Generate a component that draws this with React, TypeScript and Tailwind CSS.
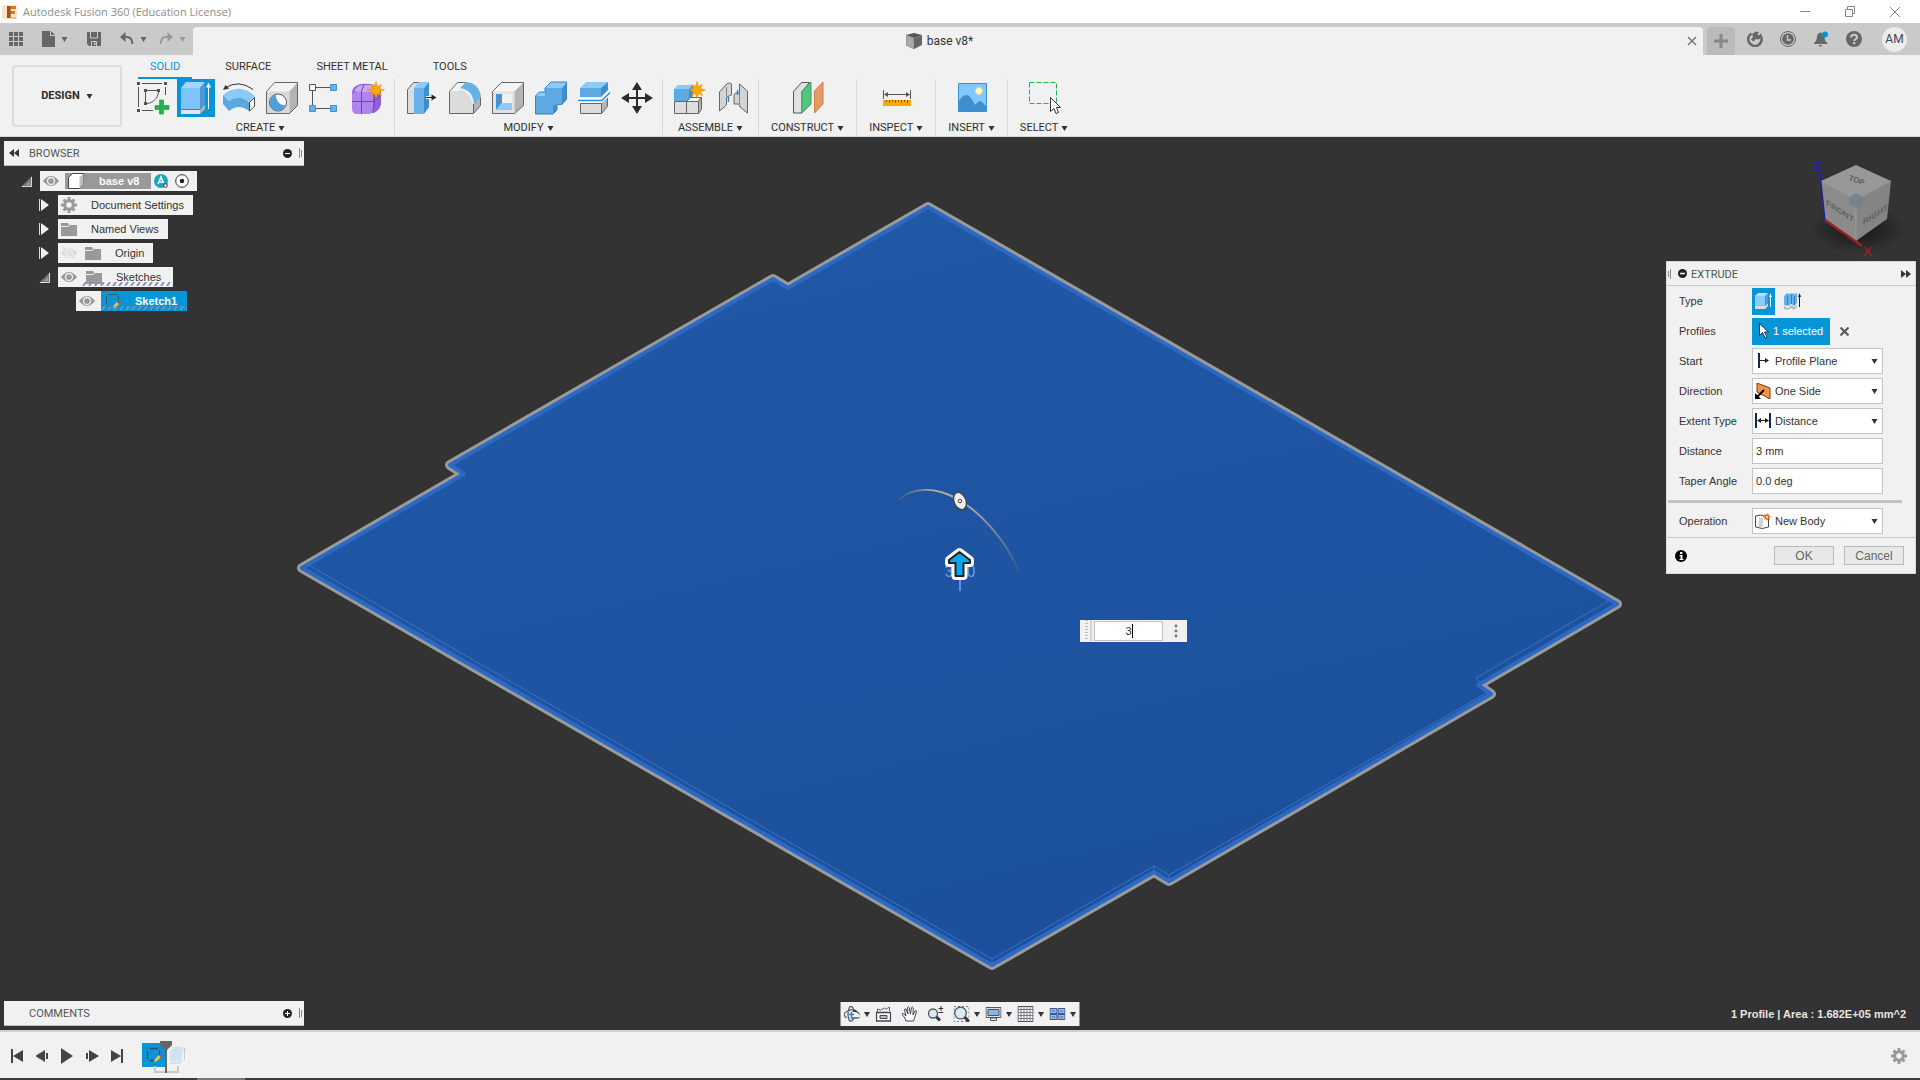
import React from "react";

type Kids = { children?: React.ReactNode };

const UI = "font-['Roboto','Liberation_Sans',sans-serif]";
const ARIAL = "font-['Liberation_Sans',Arial,sans-serif]";

const Ic = ({ w = 38, h = 38, children }: Kids & { w?: number; h?: number }) => (
  <svg width={w} height={h} viewBox={`0 0 ${w} ${h}`} fill="none" aria-hidden="true" className="block shrink-0">
    {children}
  </svg>
);

const Caret = ({ color = "#333" }: { color?: string }) => (
  <Ic w={7} h={5}>
    <path d="M0.5 0h6L3.500 5z" fill={color} />
  </Ic>
);

const Star = ({ x, y }: { x: number; y: number }) => (
  <path
    transform={`translate(${x} ${y})`}
    d="M0-8.500 1.500-3.500 5.500-5.500 3.500-1.500 8.500 0 3.500 1.500 5.500 5.500 1.500 3.500 0 8.500-1.500 3.500-5.500 5.500-3.500 1.500-8.500 0-3.500-1.500-5.500-5.500-1.500-3.500z"
    fill="#ffa800"
    stroke="#e08a00"
    strokeWidth=".5"
  />
);

/* ---------- ribbon icons ---------- */

const SketchIcon = () => (
  <Ic>
    <path d="M8 4.500h20M4.500 8v20M8 31.500h11M31.500 8v8" stroke="#555" />
    <g fill="#555">
      <path d="M3 3h3v3H3zM30 3h3v3h-3zM3 30h3v3H3zM10 10h3v3h-3zM23 10h3v3h-3zM10 23h3v3h-3z" />
    </g>
    <path d="M13 11.500h10M11.500 13v10M24.500 13C24 19 19 24 13 24.500" stroke="#555" />
    <path d="M25.500 21h4v5.500H35v4h-5.500V35h-4v-4.500H21v-4h4.500z" fill="#22b14c" stroke="#149a3c" strokeWidth=".6" />
  </Ic>
);
const ExtrudeIcon = () => (
  <Ic>
    <path d="M4 31h19v4H4z" fill="#e4e4e4" />
    <path d="M23 31l5-6v5l-5 5z" fill="#b5b5b5" />
    <path d="M4 9h19v21H4z" fill="#7cc4fb" />
    <path d="M4 9l5-6h19l-5 6z" fill="#a3d7ff" />
    <path d="M23 9l5-6v21l-5 6z" fill="#4a9ad6" />
    <path d="M31.500 30V6" stroke="#fff" />
    <path d="M31.500 3.500l2.500 5h-5z" fill="#fff" />
  </Ic>
);
const RevolveIcon = () => (
  <Ic>
    <path d="M3 16Q19 3 35 17l-6 6Q19 15 9 22z" fill="#8acbfb" />
    <path d="M3 16l6 6Q19 15 29 23v9Q19 24 9 32l-6-7z" fill="#5ba8e0" />
    <path d="M29.500 23.500l5-5v9l-5 4.500z" fill="#fff" stroke="#444" />
    <path d="M5 9Q19 0 33 10.500" stroke="#333" />
    <path d="M3 11l2.500-5L9 9.500z" fill="#333" />
  </Ic>
);
const HoleIcon = () => (
  <Ic>
    <path d="M3.500 12.500l8-9h23l-8 9z" fill="#f3f3f3" />
    <path d="M3.500 12.500h23v22h-23z" fill="#d9d9d9" />
    <path d="M26.500 12.500l8-9v23l-8 8z" fill="#b4b4b4" />
    <path d="M3.500 12.500l8-9h23v23l-8 8h-23z" stroke="#666" />
    <circle cx="15" cy="23.500" r="8.500" fill="#fff" stroke="#555" />
    <path d="M13 16a8 8 0 1 0 9.500 10C17 27 13 22 13 16z" fill="#4f9fdc" />
  </Ic>
);
const PatternIcon = () => (
  <Ic>
    <path d="M10 8.500h14M6.500 12v14M10 29.500h14" stroke="#555" />
    <path d="M3.500 5.500h6v6h-6z" fill="#fff" stroke="#555" />
    <path d="M24.500 5.500h6v6h-6zM3.500 26.500h6v6h-6zM24.500 26.500h6v6h-6z" fill="#68b0e8" stroke="#4394d2" />
  </Ic>
);
const FormIcon = () => (
  <Ic>
    <path d="M3 14Q3 8 9 6q4-2 12-1 9 1 11 6v14q-1 6-7 9H9q-6-1-6-7z" fill="#8e62d0" />
    <path d="M3 16q0-3 5-3h11q5 0 5 3v13q0 6-5 6H8q-5 0-5-6z" fill="#b083ee" />
    <path d="M5 12Q8 6 14 6h12l-3 7H9z" fill="#c9a4f8" />
    <path d="M12.500 13v22M3 22.500h21l7-5M15 6l-3 7M25 13q1 12-1 19" stroke="#6f45b0" />
    <Star x={27} y={11} />
  </Ic>
);
const PressPullIcon = () => (
  <Ic>
    <path d="M5.500 10.500l6-7h6l-5 7v24h-7z" fill="#dcdcdc" stroke="#666" />
    <path d="M12 9h10v26H12z" fill="#68b0e8" />
    <path d="M12 9l5-6h10l-5 6z" fill="#8acbfb" />
    <path d="M22 9l5-6v25l-5 7z" fill="#3d8fcd" />
    <path d="M24 18.500h7" stroke="#fff" strokeWidth="3" />
    <path d="M24 18.500h7" stroke="#222" />
    <path d="M29.500 15.500l5 3-5 3z" fill="#222" />
  </Ic>
);
const FilletIcon = () => (
  <Ic>
    <path d="M4.500 12.500l8-9h10l-7 7q9 2 13 16v8h-24z" fill="#dcdcdc" />
    <path d="M4.500 12.500l8-9h8l-6 8z" fill="#f5f5f5" />
    <path d="M28.500 25l7-7v9l-7 7.500z" fill="#b4b4b4" />
    <path d="M15 9l6-6Q34 4 36 18l-7 7Q28 11 15 9z" fill="#68b0e8" />
    <path d="M20.500 3.500h-8l-8 9v22h24l7-8v-8M28.500 25v9" stroke="#666" />
  </Ic>
);
const ShellIcon = () => (
  <Ic>
    <path d="M4.500 12.500l9-9h22l-9 9z" fill="#f5f5f5" />
    <path d="M4.500 12.500h22v22h-22z" fill="#e2e2e2" />
    <path d="M26.500 12.500l9-9v23l-9 8z" fill="#b4b4b4" />
    <path d="M4.500 12.500l9-9h22v23l-9 8h-22z" stroke="#666" />
    <path d="M8 15h16v16H8z" fill="#fff" />
    <path d="M8 15h6v9l-6 7z" fill="#4394d2" />
    <path d="M14 15h10v9H14z" fill="#f1f1f1" />
    <path d="M8 31l6-7h10v7z" fill="#8acbfb" />
  </Ic>
);
const CombineIcon = () => (
  <Ic>
    <path d="M4 17h10V9h17v17H23v9H4z" fill="#5fa9e2" />
    <path d="M4 17l4-4h6v4zM14 9l6-6h16l-5 6z" fill="#8acbfb" />
    <path d="M31 9l5-6v17l-5 6h-5v5l-4 4v-9h9z" fill="#3d8fcd" />
    <path d="M4.500 17l4-4h5.500V9l6-6h15.500v17l-5 5.500H26V31l-4 4H4.500z" stroke="#3585c2" />
  </Ic>
);
const SplitIcon = () => (
  <Ic>
    <path d="M6 9h21v9H6z" fill="#5fa9e2" />
    <path d="M6 9l6-6h22l-7 6z" fill="#8acbfb" />
    <path d="M27 9l7-6v8l-7 7z" fill="#3d8fcd" />
    <path d="M6.500 24.500h21v10h-21z" fill="#dcdcdc" stroke="#666" />
    <path d="M27.500 24.500l6-6v9l-6 7z" fill="#b4b4b4" stroke="#666" />
    <path d="M4 21.500h24l8-8" stroke="#fff" strokeWidth="4" />
    <path d="M4 21.500h24l8-8" stroke="#1e90e6" strokeWidth="1.500" />
  </Ic>
);
const MoveIcon = () => (
  <Ic>
    <path d="M20 8v22M9 19h22" stroke="#2b2b2b" strokeWidth="2" />
    <path d="M20 3l5 8H15zM20 35l5-8H15zM4 19l8-5v10zM36 19l-8-5v10z" fill="#2b2b2b" />
  </Ic>
);
const ComponentIcon = () => (
  <Ic>
    <path d="M4 10h15v12H4z" fill="#5fa9e2" />
    <path d="M4 10l4-4h15l-4 4z" fill="#8acbfb" />
    <path d="M19 10l4-4v11l-4 5z" fill="#3d8fcd" />
    <path d="M4.500 22.500h12v12h-12zM16.500 22.500h12v12h-12z" fill="#dedede" stroke="#666" />
    <path d="M16.500 22.500l4-4h11l-3 4z" fill="#f7f7f7" stroke="#666" />
    <path d="M28.500 22.500l3-4v12l-3 4z" fill="#b4b4b4" stroke="#666" />
    <Star x={27} y={11} />
  </Ic>
);
const JointIcon = () => (
  <Ic>
    <path d="M6.500 13l7-8q3-2 5 0v11l-5 2v8l-7 6z" fill="#d3d3d3" stroke="#666" />
    <path d="M13.500 8v9" stroke="#888" />
    <path d="M34.500 12l-8-7v9l-4 0-1.500 2v9h5l1 3 7.500 6z" fill="#d3d3d3" stroke="#666" />
    <path d="M26.500 14v14" stroke="#888" />
    <path d="M15.500 18v5M24.500 11v5" stroke="#1e90e6" strokeWidth="1.500" />
  </Ic>
);
const ConstructIcon = () => (
  <Ic>
    <path d="M4.500 12.500l8-9h8l-7.500 9v21.500H4.500z" fill="#e0e0e0" stroke="#555" />
    <path d="M13 12.500L22 3v22l-9 9z" fill="#56c57c" stroke="#34a45b" />
    <path d="M25.500 12L34 3v22l-8.500 9z" fill="#e79a66" stroke="#cf7d45" />
  </Ic>
);
const InspectIcon = () => (
  <Ic>
    <path d="M6.500 11v9M33.500 11v9M8 15.500h24" stroke="#555" />
    <path d="M7 15.500l4-2.500v5zM33 15.500l-4-2.500v5z" fill="#555" />
    <path d="M6 21h28v6H6z" fill="#ffa800" />
    <path d="M9.500 21v2M12.500 21v3M15.500 21v2M18.500 21v3M21.500 21v2M24.500 21v3M27.500 21v2M30.500 21v3" stroke="#7a5200" />
  </Ic>
);
const InsertIcon = () => (
  <Ic>
    <path d="M5.500 4.500h28v28h-28z" fill="#82c8fd" stroke="#3d8fcd" />
    <path d="M6 22q4-7 8-6 3 0 8 10 5-6 7-3l4 4v5H6z" fill="#3d8fcd" />
    <circle cx="26" cy="12" r="3.500" fill="#fffbd0" stroke="#e8dc8a" />
  </Ic>
);
const SelectIcon = () => (
  <Ic>
    <path d="M4.500 3.500h27v21h-27z" stroke="#22b14c" strokeDasharray="5 2" />
    <path d="M25.500 18.500v14l3.500-3 2 5 2.500-1-2-5h4z" fill="#fff" stroke="#333" />
  </Ic>
);

const Tool = ({ label, active, children }: Kids & { label: string; active?: boolean }) => (
  <button type="button" aria-label={label} className={active ? "bg-[#0696d7]" : ""}>
    {children}
  </button>
);

const Group = ({ name, wide, last, children }: Kids & { name: string; wide?: boolean; last?: boolean }) => (
  <div className={`flex flex-col items-center justify-between ${wide ? "px-[7px]" : "px-3"} ${last ? "" : "border-r border-[#d9d9d9]"}`}>
    <div className="flex gap-[5px]">{children}</div>
    <button type="button" className="flex items-center gap-[3px] text-[11px] leading-[14px] text-[#2f2f2f]">
      {name}
      <Caret />
    </button>
  </div>
);

const Ribbon = () => (
  <div className="flex h-[82px] shrink-0 border-b border-[#d5d9d8] bg-[#f1f1f1] pl-3">
    <button type="button" className="mt-[10px] mr-[5px] flex h-[62px] w-[110px] items-center justify-center gap-[6px] rounded border-2 border-[#dcdcdc] text-[11px] font-bold text-[#2b2b2b]">
      DESIGN
      <Caret />
    </button>
    <div className="flex flex-col">
      <div role="tablist" className="flex h-6 gap-[21px] pl-[11px] text-[11px] text-[#333]">
        <button type="button" role="tab" aria-selected="true" className="border-b-2 border-[#0696d7] px-3 pt-[2px] text-[#0696d7]">SOLID</button>
        <button type="button" role="tab" className="px-3">SURFACE</button>
        <button type="button" role="tab" className="px-3">SHEET METAL</button>
        <button type="button" role="tab" className="px-3">TOOLS</button>
      </div>
      <div className="flex h-[56px]">
        <Group name="CREATE" wide>
          <Tool label="Create sketch"><SketchIcon /></Tool>
          <Tool label="Extrude" active><ExtrudeIcon /></Tool>
          <Tool label="Revolve"><RevolveIcon /></Tool>
          <Tool label="Hole"><HoleIcon /></Tool>
          <Tool label="Pattern"><PatternIcon /></Tool>
          <Tool label="Create form"><FormIcon /></Tool>
        </Group>
        <Group name="MODIFY" wide>
          <Tool label="Press pull"><PressPullIcon /></Tool>
          <Tool label="Fillet"><FilletIcon /></Tool>
          <Tool label="Shell"><ShellIcon /></Tool>
          <Tool label="Combine"><CombineIcon /></Tool>
          <Tool label="Split body"><SplitIcon /></Tool>
          <Tool label="Move"><MoveIcon /></Tool>
        </Group>
        <Group name="ASSEMBLE" wide>
          <Tool label="New component"><ComponentIcon /></Tool>
          <Tool label="Joint"><JointIcon /></Tool>
        </Group>
        <Group name="CONSTRUCT"><Tool label="Offset plane"><ConstructIcon /></Tool></Group>
        <Group name="INSPECT"><Tool label="Measure"><InspectIcon /></Tool></Group>
        <Group name="INSERT"><Tool label="Insert image"><InsertIcon /></Tool></Group>
        <Group name="SELECT" last><Tool label="Select"><SelectIcon /></Tool></Group>
      </div>
    </div>
  </div>
);

/* ---------- window chrome ---------- */

const TitleBar = () => (
  <header className="flex h-[23px] shrink-0 items-center bg-white pr-5 pl-[2px]">
    <Ic w={16} h={16}>
      <path d="M0 1h15v14H0z" fill="#fbe3cd" />
      <path d="M5 2h9v3H8.500v2H13v3H8.500v4H5z" fill="#d97a1d" />
      <path d="M5 2h3.500v12H5z" fill="#a9500b" />
      <path d="M9 13h5v2H9z" fill="#f4b983" />
    </Ic>
    <h1 className="ml-[5px] grow font-['Open_Sans','Noto_Sans',sans-serif] text-[11px] leading-4 text-[#8c8c8c]">Autodesk Fusion 360 (Education License)</h1>
    <div className="flex gap-[35px]">
      <button type="button" aria-label="Minimize"><Ic w={10} h={12}><path d="M0 5.500h10" stroke="#888" /></Ic></button>
      <button type="button" aria-label="Restore"><Ic w={10} h={12}><path d="M.5 3.500h7v7h-7zM2.500 3V.5h7v7H8" stroke="#888" /></Ic></button>
      <button type="button" aria-label="Close"><Ic w={10} h={12}><path d="M0 1l10 10M10 1L0 11" stroke="#888" /></Ic></button>
    </div>
  </header>
);

const QuickBar = () => (
  <div className="flex h-8 shrink-0 bg-[#cacaca]">
    <div className="flex w-[193px] shrink-0 items-center pl-[9px]">
      <button type="button" aria-label="Data panel">
        <Ic w={14} h={14}><path d="M0 0h4v4H0zM5 0h4v4H5zM10 0h4v4h-4zM0 5h4v4H0zM5 5h4v4H5zM10 5h4v4h-4zM0 10h4v4H0zM5 10h4v4H5zM10 10h4v4h-4z" fill="#666" /></Ic>
      </button>
      <button type="button" aria-label="File" className="ml-[19px] flex items-center gap-[6px]">
        <Ic w={13} h={16}><path d="M0 0h8v5h5v11H0zM9 0l4 4H9z" fill="#666" /></Ic>
        <Caret color="#666" />
      </button>
      <button type="button" aria-label="Save" className="ml-[19px]">
        <Ic w={14} h={14}>
          <path d="M0 0h14v14H2l-2-2z" fill="#666" />
          <path d="M3.500 0v6h7V0M4.500 14V9.500h5V14" stroke="#cacaca" />
          <path d="M7 10.500h1.500V13H7z" fill="#cacaca" />
        </Ic>
      </button>
      <button type="button" aria-label="Undo" className="ml-[19px] flex items-center gap-[6px]">
        <Ic w={14} h={14}><path d="M2 5h5q5 0 5.500 7" stroke="#666" strokeWidth="2" /><path d="M0 5l5.500-5v10z" fill="#666" /></Ic>
        <Caret color="#666" />
      </button>
      <button type="button" aria-label="Redo" className="ml-3 flex items-center gap-[6px]">
        <Ic w={14} h={14}><path d="M12 5H7q-5 0-5.500 7" stroke="#999" strokeWidth="2" /><path d="M14 5L8.500 0v10z" fill="#999" /></Ic>
        <Caret color="#999" />
      </button>
    </div>
    <div className="mt-1 flex grow items-center rounded-t bg-[#f1f1f1] pr-[5px]">
      <div className="flex grow items-center justify-center gap-[5px] text-[12px] text-[#333]">
        <Ic w={16} h={16}>
          <path d="M0 2l8-2 8 2-8 3z" fill="#555" />
          <path d="M0 2l8 3v11l-8-4z" fill="#aaa" stroke="#777" strokeWidth=".6" />
          <path d="M8 5l8-3v10l-8 4z" fill="#666" />
        </Ic>
        base v8*
      </div>
      <button type="button" aria-label="Close tab" className="p-[1px]"><Ic w={10} h={10}><path d="M1 1l8 8M9 1L1 9" stroke="#777" strokeWidth="1.500" /></Ic></button>
    </div>
    <button type="button" aria-label="New tab" className="mt-1 ml-1 flex w-7 items-center justify-center rounded-t bg-[#bbb]">
      <Ic w={14} h={14}><path d="M7 0v14M0 7h14" stroke="#888" strokeWidth="3" /></Ic>
    </button>
    <div className="flex items-center gap-[17px] pr-[13px] pl-3">
      <button type="button" aria-label="Extensions">
        <Ic w={16} h={16}>
          <path d="M4.500 2.500a6.700 6.700 0 1 0 9.500 3" stroke="#666" strokeWidth="2.500" />
          <path d="M5 3l4-2.500 3 .5-1.500 2.500 1.500 1 2-2.500.8 3L12 8.500 9 8 6.500 10.500 4 8.500 6 6z" fill="#666" />
        </Ic>
      </button>
      <button type="button" aria-label="Job status">
        <Ic w={16} h={16}>
          <circle cx="8" cy="8" r="7.500" stroke="#666" />
          <circle cx="8" cy="8" r="5.800" fill="#666" />
          <path d="M7.500 4v5H11" stroke="#cacaca" strokeWidth="1.500" />
        </Ic>
      </button>
      <button type="button" aria-label="Notifications">
        <Ic w={16} h={16}>
          <path d="M1 12q3-2 3-7 1-3 3-3.500 4 .5 4.500 4.500 0 4 3 6v1H1z" fill="#666" />
          <path d="M5.500 14h4L7.500 16z" fill="#666" />
          <circle cx="12" cy="3.500" r="3" fill="#0696d7" />
        </Ic>
      </button>
      <button type="button" aria-label="Help">
        <Ic w={16} h={16}>
          <circle cx="8" cy="8" r="8" fill="#666" />
          <path d="M5 6.500Q5.200 3.800 8 3.800T11 6.200Q11 7.500 9.300 8.300 8.200 9 8.200 10" stroke="#cacaca" strokeWidth="2" />
          <path d="M7 11.200h2.300v2H7z" fill="#cacaca" />
        </Ic>
      </button>
      <button type="button" className="ml-[3px] flex h-[25px] w-[25px] items-center justify-center rounded-full bg-[#ececec] text-[12px] text-[#444]">AM</button>
    </div>
  </div>
);

/* ---------- browser ---------- */

const Eye = ({ off }: { off?: boolean }) => (
  <Ic w={16} h={12}>
    <path d="M0 6Q8-4 16 6 8 16 0 6z" fill={off ? "#dadada" : "#999"} />
    <circle cx="8" cy="6" r="3.500" fill={off ? "#dadada" : "#999"} stroke="#f1f1f1" strokeWidth="1.300" />
    {off && <path d="M2 0l12 12" stroke="#f1f1f1" strokeWidth="3" />}
    {off && <path d="M2 0l12 12" stroke="#dadada" strokeWidth="1.500" />}
  </Ic>
);
const Folder = () => (
  <Ic w={16} h={13}>
    <path d="M0 0h7l1.500 2H16v11H0z" fill="#999" />
    <path d="M0 3.500h7l2-1.500" stroke="#f1f1f1" />
  </Ic>
);
const Gear = () => (
  <Ic w={16} h={16}>
    <path d="M8 0v16M0 8h16M2.500 2.500l11 11M13.500 2.500l-11 11" stroke="#999" strokeWidth="3" />
    <circle cx="8" cy="8" r="4.300" stroke="#999" strokeWidth="3" fill="#f1f1f1" />
  </Ic>
);
const Closed = () => (
  <button type="button" aria-label="Expand">
    <Ic w={10} h={12}><path d="M.5 0v12" stroke="#ddd" /><path d="M2 0l8 6-8 6z" fill="#eee" /></Ic>
  </button>
);
const Opened = () => (
  <button type="button" aria-label="Collapse">
    <Ic w={11} h={11}>
      <path d="M11 0v11H0z" fill="#777" />
      <path d="M9 5v4H5z" fill="#999" />
      <path d="M10.500 1v9.500H1" stroke="#ddd" />
    </Ic>
  </button>
);
const SketchGlyph = () => (
  <Ic w={16} h={16}>
    <path d="M4 1.500h8M1.500 3v8M3 13.500h4M13.500 3v4" stroke="#456" />
    <path d="M8 15l1-3 3-3 2 2-3 3z" fill="#f5c342" />
    <path d="M12 9l2-1.500 1.500 1.500L14 11z" fill="#e33" />
  </Ic>
);
const Hatch = () => (
  <svg aria-hidden="true" className="absolute bottom-px left-0 h-[4px] w-full">
    <defs>
      <pattern id="hatch" width="6" height="4" patternUnits="userSpaceOnUse">
        <path d="M1 4l3-4" stroke="#7d8fb5" strokeWidth="1.800" />
      </pattern>
    </defs>
    <rect width="100%" height="4" fill="url(#hatch)" />
  </svg>
);

const PanelHead = ({ title, plus }: { title: string; plus?: boolean }) => (
  <div className="flex h-[25px] w-[300px] items-center border-b border-[#bbb] bg-[#f1f1f1] pr-[2px] pl-[5px]">
    <span className="w-5">
      {!plus && <Ic w={10} h={8}><path d="M5 0v8L0 4zM10 0v8L5 4z" fill="#333" /></Ic>}
    </span>
    <h2 className="grow pt-[2px] text-[11px] leading-4 text-[#555]">{title}</h2>
    <button type="button" aria-label={plus ? "Expand panel" : "Collapse panel"}>
      <Ic w={9} h={9}>
        <circle cx="4.500" cy="4.500" r="4.500" fill="#222" />
        <path d={plus ? "M2 4.500h5M4.500 2v5" : "M2 4.500h5"} stroke="#fff" />
      </Ic>
    </button>
    <span className="ml-[7px]"><Ic w={3} h={12}><path d="M.5 1v10M2.500 3v7" stroke="#888" /></Ic></span>
  </div>
);

const Browser = () => (
  <aside className="absolute top-1 left-1">
    <PanelHead title="BROWSER" />
    <ul className={`mt-[5px] flex flex-col gap-1 text-[11px] text-[#333] ${ARIAL}`}>
      <li className="flex h-5 items-center gap-2 pl-[17px]">
        <Opened />
        <div className="flex h-5 items-center bg-[#f1f1f1] pr-2 pl-[3px]">
          <Eye />
          <div className="ml-[6px] flex h-4 items-center bg-[#999] pr-3 pl-[3px]">
            <Ic w={16} h={16}>
              <path d="M.5 4.500l4-4h11v11l-4 4H.5z" fill="#fff" stroke="#444" />
              <path d="M11.500 4.500l4-4v11l-4 4z" fill="#b9c0c8" />
            </Ic>
            <span className="ml-[15px] font-bold text-white">base v8</span>
          </div>
          <span className="ml-[3px]">
            <Ic w={14} h={14}>
              <circle cx="7" cy="7" r="7" fill="#16a9bb" />
              <path d="M4 10l3-7 2.500 6M5 8h3.500" stroke="#fff" strokeWidth="1.600" />
              <circle cx="11.500" cy="11.500" r="1.800" fill="#fff" stroke="#333" />
            </Ic>
          </span>
          <span className="ml-[7px]">
            <Ic w={14} h={14}><circle cx="7" cy="7" r="6.300" fill="#fff" stroke="#333" /><circle cx="7" cy="7" r="2.300" fill="#222" /></Ic>
          </span>
        </div>
      </li>
      <li className="flex h-5 items-center gap-[9px] pl-[35px]">
        <Closed />
        <div className="flex h-5 items-center gap-[14px] bg-[#f1f1f1] pr-[9px] pl-[3px]"><Gear />Document Settings</div>
      </li>
      <li className="flex h-5 items-center gap-[9px] pl-[35px]">
        <Closed />
        <div className="flex h-5 items-center gap-[14px] bg-[#f1f1f1] pr-[9px] pl-[3px]"><Folder />Named Views</div>
      </li>
      <li className="flex h-5 items-center gap-[9px] pl-[35px]">
        <Closed />
        <div className="flex h-5 items-center bg-[#f1f1f1] pr-[9px] pl-[3px]">
          <Eye off />
          <span className="ml-2 flex items-center gap-[14px]"><Folder />Origin</span>
        </div>
      </li>
      <li className="flex h-5 items-center gap-2 pl-[35px]">
        <Opened />
        <div className="flex h-5 items-center bg-[#f1f1f1] pl-[3px]">
          <Eye />
          <span className="relative ml-[5px] flex h-5 items-center gap-[14px] pr-3 pl-1"><Folder />Sketches<Hatch /></span>
        </div>
      </li>
      <li className="flex h-5 items-center pl-[72px]">
        <div className="flex h-5 items-center bg-[#f1f1f1] pl-[3px]">
          <Eye />
          <span className="relative ml-[6px] flex h-5 items-center gap-[14px] bg-[#0696d7] pr-[10px] pl-1 font-bold text-white"><SketchGlyph />Sketch1<Hatch /></span>
        </div>
      </li>
    </ul>
  </aside>
);

/* ---------- extrude dialog ---------- */

const FIELD = "h-[26px] w-[131px] border border-[#c4c4c4] bg-white text-[11px] text-[#333]";

const Row = ({ label, id, children }: Kids & { label: string; id?: string }) => (
  <div className="flex h-[30px] items-center pl-3">
    {id ? <label htmlFor={id} className="w-[73px]">{label}</label> : <span className="w-[73px]">{label}</span>}
    {children}
  </div>
);
const Drop = ({ label, id, value, children }: Kids & { label: string; id: string; value: string }) => (
  <Row label={label} id={id}>
    <div className="relative">
      <select id={id} className={`${FIELD} appearance-none pl-[22px]`}><option>{value}</option></select>
      <span className="pointer-events-none absolute top-[5px] left-[3px]">{children}</span>
      <span className="pointer-events-none absolute top-[11px] right-[5px]"><Caret /></span>
    </div>
  </Row>
);

const ExtrudePanel = () => (
  <form className={`absolute top-[124px] right-1 w-[250px] border border-[#d8d8d8] bg-[#f1f1f1] text-[11px] text-[#333] ${ARIAL}`} onSubmit={(e) => e.preventDefault()}>
    <div className="flex h-6 items-center border-b border-[#c8c8c8] pr-1 pl-[1px]">
      <Ic w={3} h={12}><path d="M.5 3v6M2.500 1v10" stroke="#888" /></Ic>
      <button type="button" aria-label="Collapse dialog" className="ml-[7px]">
        <Ic w={9} h={9}><circle cx="4.500" cy="4.500" r="4.500" fill="#222" /><path d="M2 4.500h5" stroke="#fff" strokeWidth="1.500" /></Ic>
      </button>
      <h2 className={`ml-1 grow pt-[2px] leading-4 text-[#555] ${UI}`}>EXTRUDE</h2>
      <Ic w={10} h={8}><path d="M0 0v8l5-4zM5 0v8l5-4z" fill="#333" /></Ic>
    </div>
    <Row label="Type">
      <button type="button" aria-label="Extrude" aria-pressed="true" className="flex h-[27px] w-[23px] items-center justify-center bg-[#0696d7]">
        <Ic w={17} h={17}>
          <path d="M0 13h10l3-3v3l-3 3H0z" fill="#ddd" />
          <path d="M10 3l3-3v10l-3 3z" fill="#4a9ad6" />
          <path d="M0 3l3-3h10l-3 3z" fill="#b5dfff" />
          <path d="M0 3h10v10H0z" fill="#8acbfb" />
          <path d="M15.500 14V3" stroke="#fff" />
          <path d="M15.500 0l1.500 4h-3z" fill="#fff" />
        </Ic>
      </button>
      <button type="button" aria-label="Thin extrude" className="ml-[9px] flex h-[27px] w-[17px] items-center justify-center">
        <Ic w={17} h={17}>
          <path d="M0 13l4 2 3-3 3 2 3-2v2l-3 3-3-2-3 2-4-1z" fill="#bbb" />
          <path d="M0 3l3-3 2 1 3-1 2 1 3-1v10l-3 3-3-2-3 2-4-1z" fill="#68b0e8" />
          <path d="M3.500 3v9M7.500 2v9M10.500 3v9" stroke="#2f7fbd" />
          <path d="M15.500 14V3" stroke="#222" />
          <path d="M15.500 0l1.500 4h-3z" fill="#222" />
        </Ic>
      </button>
    </Row>
    <Row label="Profiles">
      <button type="button" className="flex h-[27px] w-[78px] items-center gap-1 bg-[#0696d7] pl-[7px] whitespace-nowrap text-white">
        <Ic w={10} h={16}><path d="M.5.500v12l3-3 2.500 5.500 2-1-2.500-5h4z" fill="#fff" stroke="#234" /></Ic>
        1 selected
      </button>
      <button type="button" aria-label="Clear selection" className="ml-[10px]"><Ic w={9} h={9}><path d="M.5.500l8 8M8.500.500l-8 8" stroke="#555" strokeWidth="2" /></Ic></button>
    </Row>
    <Drop label="Start" id="start" value="Profile Plane">
      <Ic w={16} h={16}><path d="M4 0v15" stroke="#0d2a55" strokeWidth="2" /><path d="M5 7.500h7" stroke="#222" /><path d="M10 5l4 2.500L10 10z" fill="#222" /></Ic>
    </Drop>
    <Drop label="Direction" id="direction" value="One Side">
      <Ic w={16} h={16}>
        <path d="M2 0l13 5v11L2 9z" fill="#f3924e" stroke="#7a3c12" />
        <path d="M1 15l8-8" stroke="#000" strokeWidth="2" />
        <path d="M0 10v6h6z" fill="#000" />
      </Ic>
    </Drop>
    <Drop label="Extent Type" id="extent" value="Distance">
      <Ic w={16} h={16}><path d="M1 0v15M15 0v15" stroke="#0d2a55" strokeWidth="2" /><path d="M3 7.500h10" stroke="#222" /><path d="M2 7.500L6 5v5zM14 7.500L10 5v5z" fill="#222" /></Ic>
    </Drop>
    <Row label="Distance" id="distance"><input id="distance" defaultValue="3 mm" className={`${FIELD} px-[3px]`} /></Row>
    <Row label="Taper Angle" id="taper"><input id="taper" defaultValue="0.0 deg" className={`${FIELD} px-[3px]`} /></Row>
    <hr className="mt-1 mr-[13px] mb-[3px] ml-px border-t-[3px] border-[#c2c2c2]" />
    <Drop label="Operation" id="operation" value="New Body">
      <Ic w={16} h={16}>
        <path d="M.5 3q5-2 9 0l4 3v8q-6 3-13 0z" fill="#fff" stroke="#444" />
        <path d="M4 5h4v9H4z" fill="#ccd3da" />
        <path d="M12 0l1 2 2-1-1 2 2 1-2 1 1 2-2-1-1 2-1-2-2 1 1-2-2-1 2-1-1-2 2 1z" fill="#e8641b" />
        <circle cx="12" cy="4" r="1.200" fill="#ffe27a" />
      </Ic>
    </Drop>
    <div className="mt-[1px] flex h-9 items-center border-t border-[#c8c8c8] pr-[11px] pl-2 text-[12px] text-[#666]">
      <Ic w={12} h={12}><circle cx="6" cy="6" r="6" fill="#000" /><path d="M5 2h2.500v2H5zM4.500 5h3v4h1v1h-4V9h1V6h-1z" fill="#fff" /></Ic>
      <span className="grow" />
      <button type="submit" className="h-[19px] w-[60px] border border-[#bbb] bg-[#e8e8e8] leading-4">OK</button>
      <button type="button" className="ml-[10px] h-[19px] w-[60px] border border-[#bbb] bg-[#e8e8e8] leading-4">Cancel</button>
    </div>
  </form>
);

/* ---------- canvas ---------- */

const BODY = "M928 70L1617 467L1478 548L1491 557L1169 744L1154 735L992 828L302 431L464 337L450 328L773 142L788 151Z";

const Model = () => (
  <svg viewBox="0 0 1920 893" preserveAspectRatio="xMidYMid slice" className="absolute inset-0 h-full w-full" aria-label="Extruded body">
    <defs>
      <linearGradient id="face" x1="0.3" y1="0" x2="0.7" y2="1">
        <stop offset="0" stopColor="#2159a6" />
        <stop offset="1" stopColor="#1b4f9c" />
      </linearGradient>
      <linearGradient id="arc" x1="0" x2="1">
        <stop offset="0" stopColor="#aaa" stopOpacity="0.1" />
        <stop offset="0.3" stopColor="#aaa" />
        <stop offset="0.6" stopColor="#aaa" />
        <stop offset="1" stopColor="#aaa" stopOpacity="0.1" />
      </linearGradient>
    </defs>
    <path d={BODY} fill="#9a9a9a" stroke="#9a9a9a" strokeWidth="10" strokeLinejoin="round" />
    <path d={BODY} fill="url(#face)" stroke="#2b69c4" strokeWidth="4" strokeLinejoin="round" />
    <path d="M305 426L992 822L1154 729L1169 738L1488 555M1476 541L1480 545M1476 541L1612 462M992 822v6M1154 729v6M1169 738v6" fill="none" stroke="#3d72c0" />
    <path d="M899 363C912 350 935 349 959 363C980 375 1005 402 1019 434" fill="none" stroke="#4a4a4a" strokeOpacity="0.5" strokeWidth="1" transform="translate(0 1)" />
    <path d="M899 363C912 350 935 349 959 363C980 375 1005 402 1019 434" fill="none" stroke="url(#arc)" strokeWidth="2" />
    <ellipse cx="960" cy="364" rx="6" ry="9" transform="rotate(-22 960 364)" fill="#eee" stroke="#444" strokeWidth="1.500" />
    <circle cx="960" cy="364" r="1.800" fill="none" stroke="#444" />
    <text x="960" y="440" textAnchor="middle" fontSize="16" fill="#6a9bea" fontFamily="Roboto, sans-serif">3.00</text>
    <path d="M960 442v12" stroke="#5b8fe0" strokeWidth="2" />
    <g strokeLinejoin="round">
      <path d="M959.500 415L970 423v3h-6.500v13h-8v-13H949v-3z" fill="#fff" stroke="#fff" strokeWidth="8" />
      <path d="M959.500 415L970 423v3h-6.500v13h-8v-13H949v-3z" fill="#00a8f0" stroke="#222" strokeWidth="2" />
    </g>
  </svg>
);

const ViewCube = () => (
  <svg viewBox="0 0 100 105" aria-label="View cube" className="absolute top-[18px] right-2 h-[105px] w-[100px]">
    <defs>
      <radialGradient id="shade">
        <stop offset="0.3" stopColor="#111" stopOpacity="0.6" />
        <stop offset="1" stopColor="#111" stopOpacity="0" />
      </radialGradient>
    </defs>
    <ellipse cx="46" cy="74" rx="48" ry="24" fill="url(#shade)" />
    <path d="M9 26L44 10 79 26 44 45z" fill="#989898" />
    <path d="M9 26L44 45V86L13 65z" fill="#8b8b8b" />
    <path d="M44 45L79 26 75 64 44 86z" fill="#848484" />
    <path d="M9 26L44 45 79 26M44 45v41" fill="none" stroke="#a4a4a4" strokeWidth=".7" />
    <path d="M37 42l7-4 7 4v7l-7 4-7-4z" fill="#727c88" fillOpacity=".7" />
    <path d="M8 19l5 47" stroke="#1f1fae" strokeWidth="1.500" />
    <path d="M13 65l37 26" stroke="#9b2020" strokeWidth="2.500" />
    <g fontFamily="Liberation Sans, sans-serif" fontWeight="bold" fill="#5d6268">
      <text fontSize="8" transform="translate(36 25) rotate(20)">TOP</text>
      <text fontSize="8" transform="translate(14 50) skewY(32)">FRONT</text>
      <text fontSize="8" transform="translate(51 70) skewY(-32)">RIGHT</text>
    </g>
    <text x="2" y="16" fontSize="13" fill="#2323b8" stroke="#2323b8" strokeWidth=".4" fontFamily="Liberation Sans, sans-serif">Z</text>
    <text x="51" y="101" fontSize="13" fill="#9b2020" stroke="#9b2020" strokeWidth=".4" fontFamily="Liberation Sans, sans-serif">X</text>
  </svg>
);

const DimensionBox = () => (
  <div className="absolute top-[54.1%] left-[56.25%] flex h-[22px] w-[107px] items-center bg-[#f1f1f1]">
    <span className="mr-[2px] ml-[5px] flex gap-[2px]">
      <Ic w={3} h={19}><path d="M1.500 0v19" stroke="#bbb" strokeWidth="3" strokeDasharray="1 2" /></Ic>
      <Ic w={2} h={22}><path d="M1 0v22" stroke="#d4d4d4" strokeWidth="2" /></Ic>
    </span>
    <input aria-label="Distance value" defaultValue="3" className={`h-5 w-[69px] border border-[#c4c4c4] bg-white text-center text-[11px] text-[#333] ${ARIAL}`} />
    <button type="button" aria-label="More" className="ml-[11px]">
      <Ic w={4} h={14}><circle cx="2" cy="2" r="1.400" fill="#777" /><circle cx="2" cy="7" r="1.400" fill="#777" /><circle cx="2" cy="12" r="1.400" fill="#777" /></Ic>
    </button>
    <span className="absolute top-1 left-[52px] h-[14px] w-px bg-black" />
  </div>
);

const Nav = ({ label, caret, children }: Kids & { label: string; caret?: boolean }) => (
  <button type="button" aria-label={label} className={`flex items-center gap-1 ${caret ? "" : "mr-[5px]"}`}>
    <Ic w={16} h={16}>{children}</Ic>
    {caret && <Caret />}
  </button>
);

const NavBar = () => (
  <div className="absolute bottom-1 left-1/2 flex h-6 -translate-x-1/2 items-center gap-[5px] bg-[#f1f1f1] px-[3px]">
    <Nav label="Orbit" caret>
      <path d="M3 12Q-2 8 4 5t11 2-2 5-5 0M6 15Q3 8 6 1q4-2 4 5M6 15q3 1 4-3" stroke="#556070" strokeWidth="1.300" />
      <path d="M8 6v5M5.500 8.500h5" stroke="#1e7fe0" strokeWidth="1.400" />
      <path d="M11 3l3 3h-4z" fill="#333" />
    </Nav>
    <Nav label="Look at">
      <path d="M1 6.500h14v8.500H1z" fill="#fff" stroke="#445" strokeWidth="1.300" />
      <path d="M4.500 9.500h7v3h-7z" fill="#bbb" stroke="#445" />
      <path d="M2 6V3l3 1 4-2 2 1 3-2v4" stroke="#667" />
    </Nav>
    <Nav label="Pan">
      <path d="M4.500 15Q4 12 1 9q-1-2 1-1.500L4.500 10 3 4q0-1.500 1.500-1L6.500 8 6 1.500q.8-1.500 1.700 0L9 8l1-6.500q1-1 1.700.3L11.500 9l2-4q1.500-.8 1.500.8L13 12l-1 3z" fill="#fff" stroke="#445" />
    </Nav>
    <Nav label="Zoom">
      <path d="M8.500 10.500l4 4" stroke="#334" strokeWidth="3" />
      <circle cx="5.500" cy="7.500" r="4.500" fill="#d5ecf0" stroke="#556" strokeWidth="1.300" />
      <path d="M13.500 0v5M11 2.500h5M11 6.500h5" stroke="#333" />
    </Nav>
    <Nav label="Fit" caret>
      <path d="M.5.500h15v15H.5z" stroke="#777" strokeDasharray="2 2" />
      <path d="M10.500 10.500l5 5" stroke="#334" strokeWidth="3" />
      <circle cx="7" cy="7" r="5.800" fill="#d5ecf0" stroke="#556" strokeWidth="1.300" />
    </Nav>
    <Nav label="Display settings" caret>
      <path d="M.5 1.500h15v10H.5z" fill="#ddd" stroke="#556" />
      <path d="M2.500 3.500h11v6h-11z" fill="#8fb2e2" stroke="#456" />
      <path d="M5 12h6v2.500H5z" fill="#eee" stroke="#556" />
    </Nav>
    <Nav label="Grid and snaps" caret>
      <path d="M.5.500h15v15H.5z" fill="#fff" stroke="#445" />
      <path d="M3.500 0v16M6.500 0v16M9.500 0v16M12.500 0v16M0 3.500h16M0 6.500h16M0 9.500h16M0 12.500h16" stroke="#778" />
    </Nav>
    <Nav label="Viewports" caret>
      <path d="M.5 2.500h7v5h-7zM8.500 2.500h7v5h-7zM.5 8.500h7v5h-7zM8.500 8.500h7v5h-7z" fill="#9dbbe6" stroke="#345a94" />
      <path d="M2.500 4.500h3v1h-3zM10.500 4.500h3v1h-3zM2.500 10.500h3v1h-3zM10.500 10.500h3v1h-3z" stroke="#6c90c8" />
    </Nav>
  </div>
);

/* ---------- timeline ---------- */

const Play = ({ label, d }: { label: string; d: string }) => (
  <button type="button" aria-label={label}><Ic w={13} h={16}><path d={d} fill="#444" /></Ic></button>
);

const Timeline = () => (
  <footer className="flex h-12 shrink-0 items-center border-t-2 border-[#d0d0ce] bg-[#f1f1f1] pt-[2px] pr-[13px] pl-[11px]">
    <div className="flex gap-3">
      <Play label="Go to start" d="M0 1h2v14H0zM12 2v12L2 8z" />
      <Play label="Step back" d="M9 2v12L-1 8zM10 5h2v6h-2z" />
      <Play label="Play" d="M0 0l12 8-12 8z" />
      <Play label="Step forward" d="M0 5h2v6H0zM3 2l10 6-10 6z" />
      <Play label="Go to end" d="M0 2l10 6-10 6zM10 1h2v14h-2z" />
    </div>
    <div className="ml-[18px] grow">
      <Ic w={46} h={34}>
        <path d="M0 4h24v24H0z" fill="#0696d7" />
        <path d="M8 9.500h8M5.500 12v8M8 21.500h4M17.500 11v5" stroke="#446" strokeWidth="1.300" />
        <path d="M12 23l1-3 4-4 2 2-4 4z" fill="#f5c342" />
        <path d="M17 16l1.500-.5 1.500 1.500-1 2z" fill="#e33" />
        <path d="M28 12l4-4h8v11l-3 3h-9z" fill="#cfe3f2" />
        <path d="M28 24h9l3-3" stroke="#ddd" strokeWidth="2" />
        <path d="M42.500 21V9M41 11l1.500-2 1.500 2" stroke="#ccc" />
        <path d="M13 27v6h23v-6" stroke="#c9c9c9" strokeWidth="2" />
        <path d="M18 2h12v4l-5 5v23h-2V11l-5-5z" fill="#666" />
      </Ic>
    </div>
    <button type="button" aria-label="Timeline settings"><Gear /></button>
  </footer>
);

export default function App() {
  return (
    <div className={`flex h-screen flex-col overflow-hidden bg-[#333] ${UI}`}>
      <TitleBar />
      <QuickBar />
      <Ribbon />
      <main className="relative grow">
        <Model />
        <Browser />
        <ViewCube />
        <ExtrudePanel />
        <DimensionBox />
        <section className="absolute bottom-1 left-1"><PanelHead title="COMMENTS" plus /></section>
        <NavBar />
        <p className={`absolute right-[14px] bottom-2 text-[11px] leading-4 font-bold text-[#e6e6e6] ${ARIAL}`}>1 Profile | Area : 1.682E+05 mm^2</p>
      </main>
      <Timeline />
      <div className="h-[2px] shrink-0 bg-[#3c3a3a]"><div className="ml-[197px] h-full w-12 bg-[#777]" /></div>
    </div>
  );
}
